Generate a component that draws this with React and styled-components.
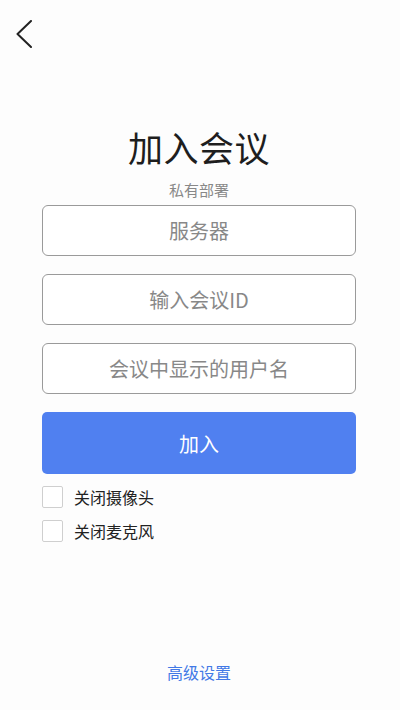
import styled, { createGlobalStyle } from 'styled-components'

const GlobalStyle = createGlobalStyle`
	* { box-sizing: border-box; }
	body {
		margin: 0;
		background: #fdfdfd;
		font-family: "Noto Sans CJK SC", "Noto Sans", sans-serif;
	}
`

const Page = styled.div`
	min-height: 710px;
	padding-right: 2px;
	display: flex;
	flex-direction: column;
	align-items: center;
`

const Header = styled.div`
	align-self: stretch;
	padding: 20px 0 0 16px;
	height: 48px;
`

const BackButton = styled.button`
	background: none;
	border: none;
	padding: 0;
	display: block;
	color: #222;
	cursor: pointer;
`

const Title = styled.h1`
	margin: 78px 0 0;
	font-size: 35px;
	line-height: 42px;
	font-weight: 400;
	color: #1e1e1e;
	letter-spacing: 0.5px;
`

const Subtitle = styled.div`
	margin-top: 12px;
	font-size: 15px;
	line-height: 20px;
	color: #888;
`

const Form = styled.div`
	width: 314px;
	margin-top: 5px;
	display: flex;
	flex-direction: column;
	gap: 18px;
`

const Field = styled.input`
	height: 51px;
	width: 100%;
	border: 1.5px solid #9a9a9a;
	border-radius: 6px;
	background: #fff;
	text-align: center;
	font-family: inherit;
	font-size: 20px;
	color: #333;
	outline: none;
	&::placeholder {
		color: #888;
	}
`

const JoinButton = styled.button`
	height: 62px;
	border: none;
	border-radius: 5px;
	background: #5080f0;
	color: #fff;
	font-family: inherit;
	font-size: 20px;
	cursor: pointer;
`

const Options = styled.div`
	width: 314px;
	margin-top: 12px;
	display: flex;
	flex-direction: column;
	gap: 12px;
`

const Option = styled.label`
	display: flex;
	align-items: center;
	gap: 11px;
	height: 22px;
	font-size: 16px;
	color: #222;
`

const Box = styled.span`
	width: 21px;
	height: 22px;
	border: 1px solid #cfcfcf;
	border-radius: 2px;
	background: #fff;
`

const Footer = styled.a`
	margin-top: auto;
	margin-bottom: 26px;
	font-size: 16px;
	line-height: 24px;
	color: #4279e6;
	text-decoration: none;
`

const ChevronLeft = () => (
	<svg width="16" height="28" viewBox="0 0 16 28" fill="none">
		<polyline points="15,1 1.5,14 15,27" stroke="currentColor" strokeWidth="2" strokeLinecap="round" strokeLinejoin="round" />
	</svg>
)

const App = () => {
	return (
		<>
			<GlobalStyle />
			<Page>
				<Header>
					<BackButton><ChevronLeft /></BackButton>
				</Header>
				<Title>加入会议</Title>
				<Subtitle>私有部署</Subtitle>
				<Form>
					<Field placeholder="服务器" />
					<Field placeholder="输入会议ID" />
					<Field placeholder="会议中显示的用户名" />
					<JoinButton>加入</JoinButton>
				</Form>
				<Options>
					<Option><Box />关闭摄像头</Option>
					<Option><Box />关闭麦克风</Option>
				</Options>
				<Footer href="#">高级设置</Footer>
			</Page>
		</>
	)
}

export default App
